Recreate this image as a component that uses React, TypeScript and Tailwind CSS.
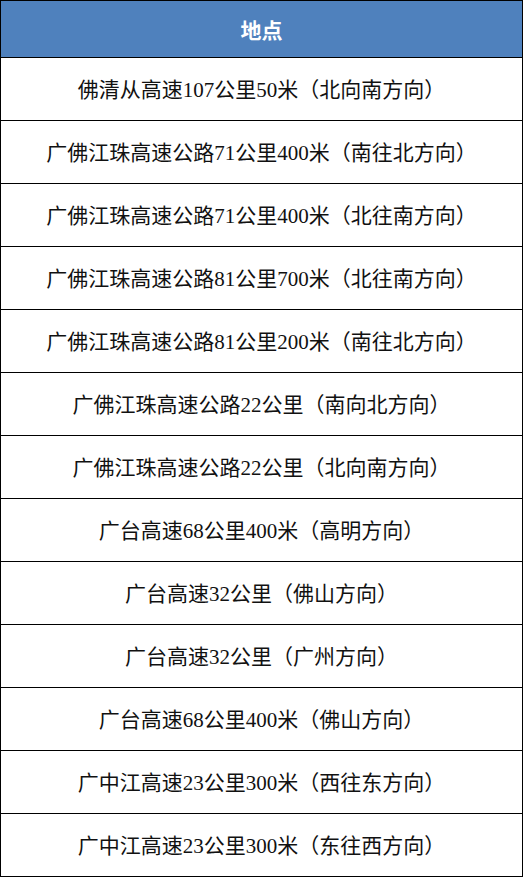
import React from "react";

const rows = [
  "佛清从高速107公里50米（北向南方向）",
  "广佛江珠高速公路71公里400米（南往北方向）",
  "广佛江珠高速公路71公里400米（北往南方向）",
  "广佛江珠高速公路81公里700米（北往南方向）",
  "广佛江珠高速公路81公里200米（南往北方向）",
  "广佛江珠高速公路22公里（南向北方向）",
  "广佛江珠高速公路22公里（北向南方向）",
  "广台高速68公里400米（高明方向）",
  "广台高速32公里（佛山方向）",
  "广台高速32公里（广州方向）",
  "广台高速68公里400米（佛山方向）",
  "广中江高速23公里300米（西往东方向）",
  "广中江高速23公里300米（东往西方向）",
];

export default function App() {
  return (
    <div
      className="w-[523px] border border-black bg-white text-black"
      style={{ fontFamily: '"Liberation Serif", "Noto Sans CJK SC", serif' }}
    >
      <div className="h-[56px] pt-[6px] bg-[#4f81bd] flex items-center justify-center text-white text-[21px] font-bold">
        地点
      </div>
      {rows.map((r, i) => (
        <div
          key={i}
          className="h-[63px] pt-[3px] border-t border-black flex items-center justify-center text-[21px] text-[#111]"
        >
          {r}
        </div>
      ))}
    </div>
  );
}
